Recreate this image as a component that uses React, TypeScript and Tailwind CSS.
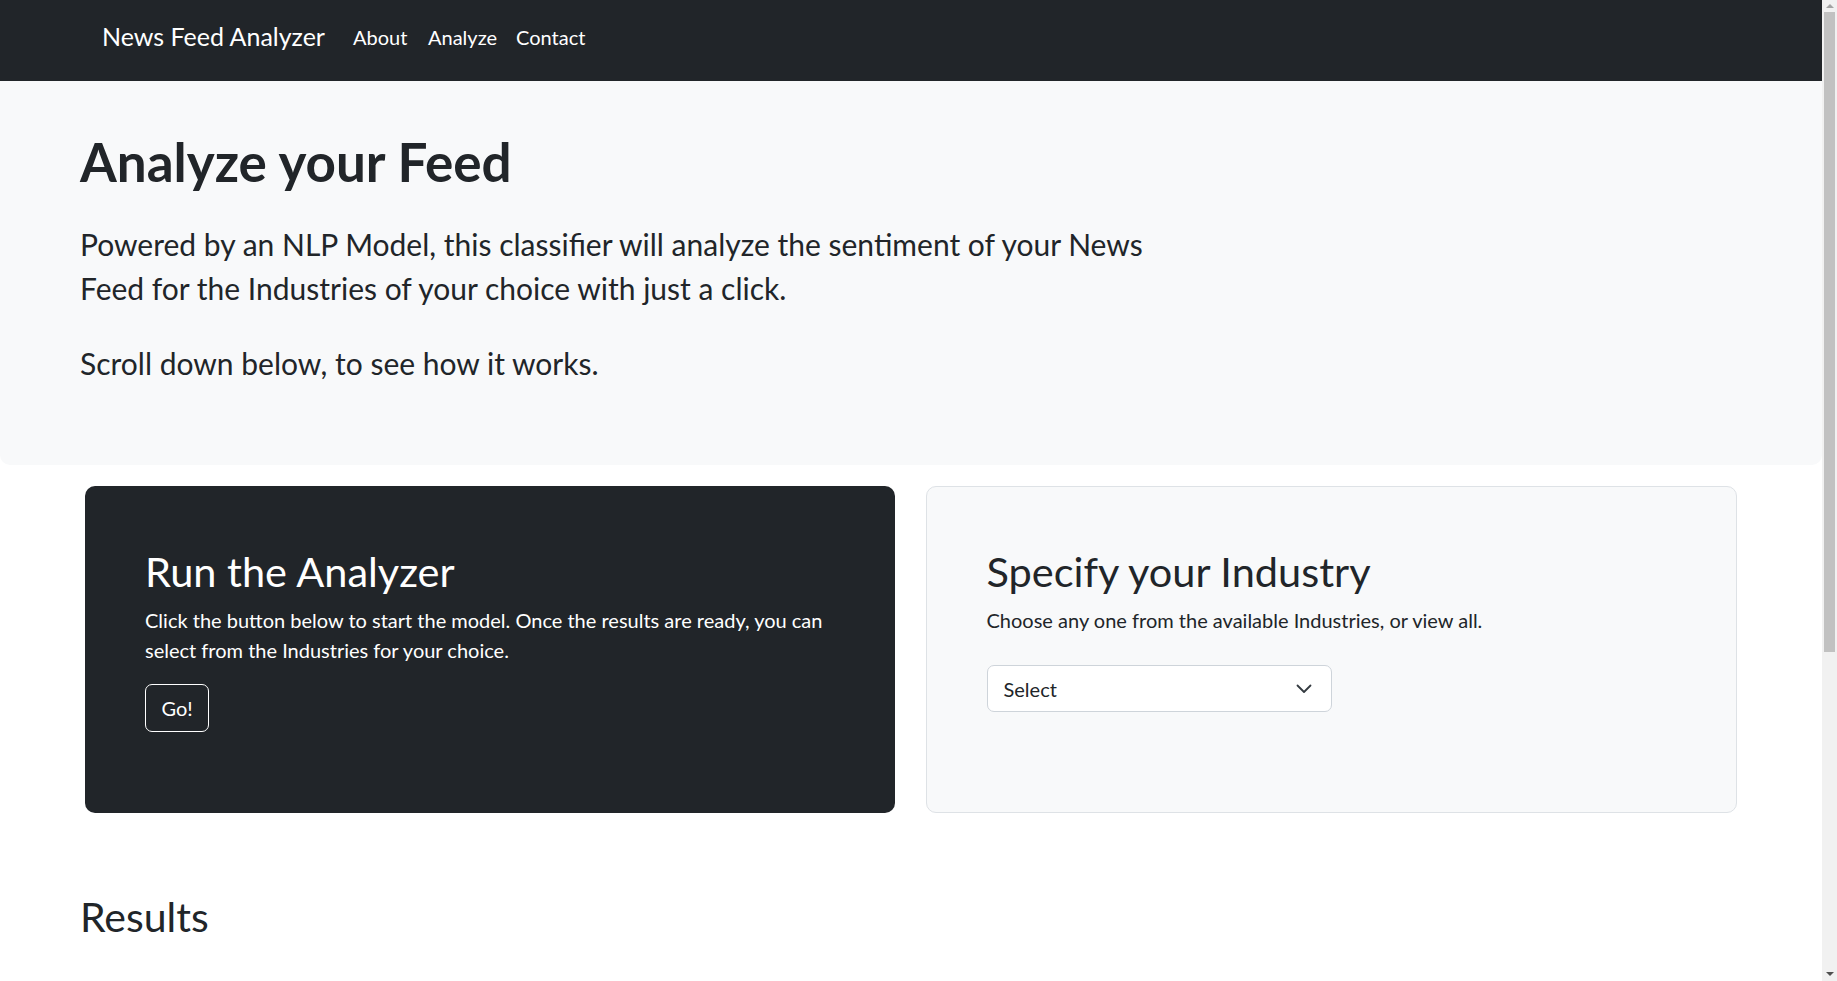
import React from "react";

const FONT = { fontFamily: "Lato, 'Noto Sans', sans-serif" };

function Chevron() {
  return (
    <svg width="16" height="10" viewBox="0 0 16 10" fill="none">
      <path d="M1.5 1.5 8 8l6.5-6.5" stroke="#343a40" strokeWidth="1.8" strokeLinecap="round" strokeLinejoin="round" />
    </svg>
  );
}

export default function App() {
  return (
    <div className="flex h-[981px] w-[1837px] overflow-hidden bg-white text-[#212529]" style={FONT}>
      <div className="flex min-w-0 flex-1 flex-col">
        <nav className="flex h-[81px] items-center bg-[#212529] pl-[102px] pb-[7px]">
          <span className="w-[241px] whitespace-nowrap text-[25px] text-white">News Feed Analyzer</span>
          <span className="w-[75px] px-[10px] text-[20px] text-white">About</span>
          <span className="w-[88px] px-[10px] text-[20px] text-white">Analyze</span>
          <span className="px-[10px] text-[20px] text-white">Contact</span>
        </nav>

        <section className="h-[384px] rounded-b-[10px] bg-[#f8f9fa] pl-[80px] pt-[48px]">
          <h1 className="mb-[28px] whitespace-nowrap text-[53px] font-bold leading-[65px]">Analyze your Feed</h1>
          <p className="whitespace-nowrap text-[30px] leading-[44px]">
            Powered by an NLP Model, this classifier will analyze the sentiment of your News
            <br />
            Feed for the Industries of your choice with just a click.
          </p>
          <p className="mt-[31px] whitespace-nowrap text-[30px] leading-[44px]">Scroll down below, to see how it works.</p>
        </section>

        <div className="mt-[21px] flex gap-[31px] pl-[85px] pr-[85px]">
          <div className="flex-1 rounded-[10px] bg-[#212529] px-[60px] pb-[59px] pt-[61px] text-white">
            <h2 className="mb-[10px] whitespace-nowrap text-[41.5px] leading-[48px]">Run the Analyzer</h2>
            <p className="mb-[19px] whitespace-nowrap text-[20px] leading-[30px]">
              Click the button below to start the model. Once the results are ready, you can
              <br />
              select from the Industries for your choice.
            </p>
            <button className="flex h-[48px] w-[64px] items-center justify-center rounded-[7px] border border-white text-[20px] text-white">
              Go!
            </button>
          </div>
          <div className="flex-1 rounded-[10px] border border-[#dee2e6] bg-[#f8f9fa] px-[60px] pb-[59px] pt-[60px]">
            <h2 className="mb-[10px] whitespace-nowrap text-[41.5px] leading-[48px]">Specify your Industry</h2>
            <p className="whitespace-nowrap text-[20px] leading-[30px]">Choose any one from the available Industries, or view all.</p>
            <div className="mb-[41px] mt-[30px] flex h-[47px] w-[345px] items-center justify-between rounded-[7px] border border-[#ced4da] bg-white pl-[16px] pr-[19px]">
              <span className="text-[20px]">Select</span>
              <Chevron />
            </div>
          </div>
        </div>

        <h2 className="mt-[80px] pl-[80px] text-[41px] leading-[48px]">Results</h2>
      </div>

      <div className="flex h-full w-[15px] flex-col bg-[#f1f1f1]">
        <div className="flex h-[12px] items-center justify-center">
          <div className="h-0 w-0 border-x-[4px] border-b-[4px] border-x-transparent border-b-[#a3a3a3]" />
        </div>
        <div className="mx-[2px] h-[640px] bg-[#c1c1c1]" />
        <div className="flex-1" />
        <div className="flex h-[15px] items-center justify-center">
          <div className="h-0 w-0 border-x-[4px] border-t-[4px] border-x-transparent border-t-[#505050]" />
        </div>
      </div>
    </div>
  );
}
